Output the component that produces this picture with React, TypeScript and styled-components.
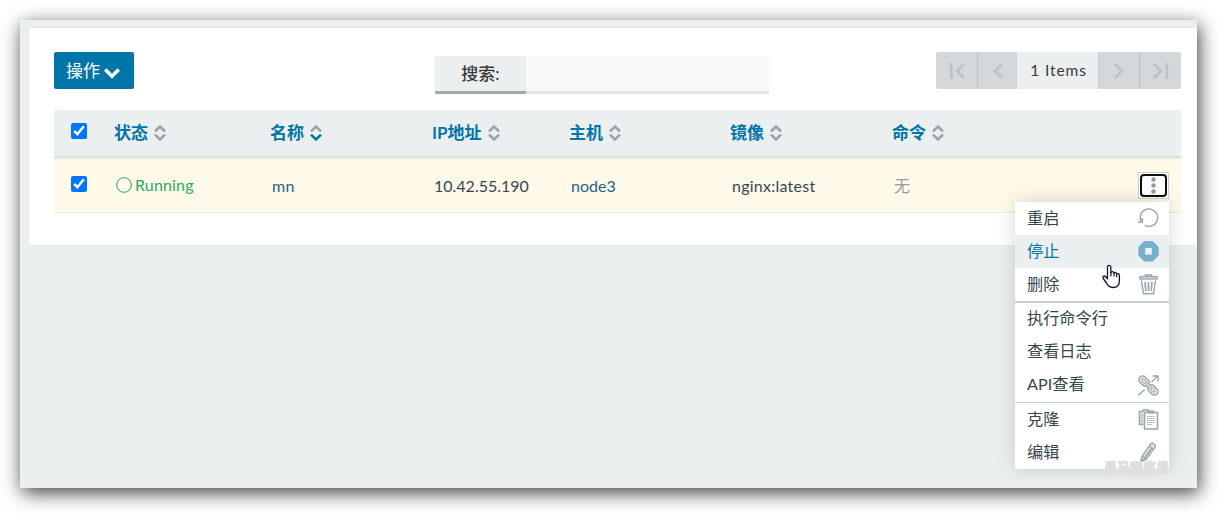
import React from 'react';
import styled, { createGlobalStyle, css } from 'styled-components';

const GlobalStyle = createGlobalStyle`
  * { box-sizing: border-box; }
  body {
    margin: 0;
    background: #fff;
    color: #36474f;
    font-family: Lato, "Noto Sans CJK SC", sans-serif;
    font-size: 16px;
    overflow: hidden;
  }
  button { font: inherit; }
`;

const Page = styled.div`
  height: 513px;
  padding: 20px 20px 25px;
`;

const Frame = styled.main`
  height: 468px;
  padding: 8px 0 0 9px;
  background: #ebeff0;
  box-shadow: 2px 5px 18px rgba(0, 0, 0, 0.75);
`;

const Panel = styled.section`
  height: 217px;
  padding: 24px 16px 0 25px;
  background: #fff;
  box-shadow: 0 0 1px rgba(0, 0, 0, 0.1);
`;

const Toolbar = styled.header`
  display: flex;
  align-items: flex-start;
  height: 58px;
`;

const ActionButton = styled.button`
  display: flex;
  align-items: center;
  gap: 4px;
  width: 80px;
  height: 37px;
  padding: 0 0 0 12px;
  border: 0;
  border-radius: 2px;
  background: #0075a8;
  color: #fff;
  font-size: 17px;
  line-height: 37px;

  svg { margin-top: 6px; }
`;

const Search = styled.label`
  display: flex;
  width: 334px;
  height: 38px;
  margin: 4px 0 0 301px;
`;

const SearchLabel = styled.span`
  width: 91px;
  border-bottom: 3px solid #a4a8aa;
  background: #ebeff0;
  color: #3a3a3a;
  font-size: 17px;
  font-weight: 500;
  line-height: 35px;
  text-align: center;
`;

const SearchInput = styled.input`
  flex: 1;
  min-width: 0;
  border: 0;
  border-bottom: 3px solid #e3e6e8;
  background: #f6f8fa;
`;

const Pager = styled.nav`
  display: flex;
  width: 245px;
  height: 37px;
  margin-left: auto;
  overflow: hidden;
  border-radius: 3px;
  background: #d4d8db;
`;

const PageButton = styled.button<{ $w: number; $line?: boolean }>`
  display: flex;
  align-items: center;
  justify-content: center;
  width: ${p => p.$w}px;
  padding: 0;
  border: 0;
  border-right: ${p => (p.$line ? '1px solid #bcc1c4' : '0')};
  background: #d4d8db;
`;

const PageCount = styled.span`
  flex: 1;
  padding-left: 2px;
  border-right: 1px solid #c8cdd0;
  background: #ebeff0;
  color: #3a3a3a;
  font-size: 15.5px;
  letter-spacing: 0.9px;
  line-height: 36px;
  text-align: center;
`;

const gridColumns = css`
  display: grid;
  grid-template-columns: 50px 156px 162px 137px 161px 162px 1fr 63px;
`;

const HeadRow = styled.div`
  ${gridColumns}
  height: 49px;
  border-bottom: 2px solid #e7e7de;
  background: #ebeff0;
  box-shadow: inset 0 -1px #d9dee0;
`;

const HeadCell = styled.div`
  display: flex;
  align-items: flex-start;
  gap: 6px;
  padding: 12px 0 0 10px;
  color: #0075a8;
  font-size: 17px;
  font-weight: 700;
  line-height: 22px;

  svg { margin-top: 3px; }
`;

const BodyRow = styled.div`
  ${gridColumns}
  height: 54px;
  border-bottom: 1px solid #e9eced;
  background: #fff9e9;
`;

const tones = { text: '#36474f', link: '#1d6289', ok: '#2aab62', muted: '#999c9c' };

const BodyCell = styled.div<{ $tone?: keyof typeof tones; $spacing?: number; $lift?: number }>`
  display: flex;
  align-items: center;
  gap: 3px;
  padding: 0 0 ${p => p.$lift ?? 0}px 12px;
  color: ${p => tones[p.$tone ?? 'text']};
  letter-spacing: ${p => p.$spacing ?? 0}px;

  svg { margin-top: 1px; }
`;

const CheckCell = styled.div<{ $top: number }>`
  padding: ${p => p.$top}px 0 0 17px;
`;

const Check = styled.input`
  display: block;
  width: 16px;
  height: 16px;
  margin: 0;
  accent-color: #0075ff;
`;

const ActionCell = styled.div`
  position: relative;
  padding: 13px 0 0 20px;
`;

const MoreButton = styled.button`
  display: flex;
  width: 31px;
  height: 27px;
  padding: 1px;
  border: 1px solid #cbd0d2;
  background: #fff;
`;

const FocusRing = styled.span`
  display: flex;
  align-items: center;
  justify-content: center;
  width: 27px;
  height: 23px;
  border: 2px solid #101010;
  border-radius: 4px;
`;

const Menu = styled.ul`
  position: absolute;
  z-index: 2;
  top: 43px;
  right: 12px;
  width: 154px;
  margin: 0;
  padding: 0;
  background: #fff;
  box-shadow: 0 0 18px rgba(0, 0, 0, 0.16);
  list-style: none;
`;

const MenuItem = styled.li<{ $active?: boolean; $raised?: boolean }>`
  display: flex;
  justify-content: space-between;
  height: 33px;
  padding: 0 10px 0 12px;
  background: ${p => (p.$active ? '#ebeff0' : '#fff')};
  color: ${p => (p.$active ? '#0075a8' : '#36474f')};
  font-size: 16.2px;
  line-height: ${p => (p.$raised ? 29 : 31)}px;

  svg { margin-top: 6px; }
`;

const Divider = styled.li<{ $h: number }>`
  height: ${p => p.$h}px;
  background: #c8cfd2;
`;

const Watermark = styled.li`
  position: absolute;
  right: 0;
  bottom: -7px;
  color: #e0dedd;
  font-size: 13px;
  font-weight: 900;
  line-height: 18px;
  white-space: nowrap;
  -webkit-text-stroke: 0.8px #e0dedd;
`;

const Cursor = styled.svg`
  position: absolute;
  top: 62px;
  left: 86px;
`;

const SortIcon = ({ desc }: { desc?: boolean }) => (
  <svg width="12" height="16" viewBox="0 0 12 16" fill="none" strokeWidth="2.5">
    <path d="M1 6.3 6 1.5 11 6.3" stroke="#9ba2a6" />
    <path d="M1 9.7 6 14.5 11 9.7" stroke={desc ? '#0075a8' : '#9ba2a6'} />
  </svg>
);

const PageIcon = ({ last, bar }: { last?: boolean; bar?: boolean }) => (
  <svg width="18" height="18" viewBox="0 0 18 18" fill="none" stroke="#bcc2c5" strokeWidth="2.7">
    <g transform={last ? 'translate(18 0) scale(-1 1)' : undefined}>
      {bar && <path d="M3.2 1v16" />}
      <path d={bar ? 'M16 2 9 9l7 7' : 'M13 2 6 9l7 7'} />
    </g>
  </svg>
);

const iconProps = { width: 21, height: 21, viewBox: '0 0 21 21', fill: 'none', stroke: '#9ba7ab' };

const RestartIcon = () => (
  <svg {...iconProps} strokeWidth="1.5">
    <path d="M3.2 13.6A8.7 8.7 0 1 1 7 17.4" />
    <path d="M.3 14h4V10" strokeWidth="1.7" />
  </svg>
);

const StopIcon = () => (
  <svg {...iconProps} stroke="none">
    <path d="M6.3 0h8.4l6 6v8.4l-6 6H6.3l-6-6V6z" fill="#75b1cd" />
    <rect x="7.2" y="7" width="6.6" height="6.6" fill="#ebf2f5" />
  </svg>
);

const TrashIcon = () => (
  <svg {...iconProps} strokeWidth="1.4">
    <path d="M7.5 2.5V1h6v1.5" />
    <rect x="2" y="2.6" width="17" height="2.4" fill="#dfe3e4" />
    <path d="M3.5 6.500 5.500 19.700h10L17.500 6.500" />
    <path d="M7 8l.8 9M10.500 8v9M14 8l-.8 9" strokeWidth="1.700" />
  </svg>
);

const LinkIcon = () => (
  <svg {...iconProps} strokeWidth="1.3">
    <g transform="rotate(45 10.5 10.5)" fill="#e4e8e9" strokeWidth="1.5">
      <rect x="-1.5" y="6.8" width="11.5" height="7.4" rx="3.7" />
      <rect x="11" y="6.8" width="11.5" height="7.4" rx="3.7" />
      <rect x="1.7" y="9.3" width="5" height="2.4" rx="1.2" fill="#fff" strokeWidth="1" />
      <rect x="14.3" y="9.3" width="5" height="2.4" rx="1.2" fill="#fff" strokeWidth="1" />
      <path d="M7 10.5h7" strokeWidth="3" />
      <path d="M7.5 10.5h6" stroke="#fff" strokeWidth="1" />
    </g>
    <path d="M.7 20.3 6.5 14.5M13.5 7 19.5 1M14.5 1h5.5v5.5" strokeWidth="1.4" />
  </svg>
);

const CloneIcon = () => (
  <svg {...iconProps}>
    <path d="M5.5 15.5h-4v-13h3l1-1.5h5l1 1.5h3" fill="#e8ebec" strokeWidth="1.6" />
    <path d="M3 6h2M3 8.5h2M3 11h2M3 13h2" />
    <rect x="6.5" y="3.5" width="13" height="16.5" fill="#fff" strokeWidth="1.6" />
    <path d="M10 4V2h6v2z" fill="#9ba7ab" />
    <path d="M9 7.5h8M9 9.5h8M9 11.5h8M9 13.5h8M9 15.5h5" strokeDasharray="1.5 .5" strokeWidth=".9" />
  </svg>
);

const PencilIcon = () => (
  <svg {...iconProps} strokeWidth="1.4">
    <path d="M3 19.8 4 14.2 12.7 2.2Q14 .5 16 2T17 5.2L8.2 17.2z" fill="#e1e5e6" />
    <path d="m11.3 4.2 4.2 3M4.5 14.5l3.6 2.5M13.5 6.5l-7 9.5" />
    <path d="M3 19.8l.5-3 2 1.5z" fill="#9ba7ab" />
  </svg>
);

const columns = ['状态', '名称', 'IP地址', '主机', '镜像', '命令'];

export default function App() {
  return (
    <Page>
      <GlobalStyle />
      <Frame>
        <Panel>
          <Toolbar>
            <ActionButton>
              操作
              <svg width="16" height="11" viewBox="0 0 16 11" fill="none" stroke="#fff" strokeWidth="3.4">
                <path d="m1.2 1.5 6.8 6.8 6.8-6.8" />
              </svg>
            </ActionButton>
            <Search>
              <SearchLabel>搜索:</SearchLabel>
              <SearchInput />
            </Search>
            <Pager>
              <PageButton $w={42} $line><PageIcon bar /></PageButton>
              <PageButton $w={39}><PageIcon /></PageButton>
              <PageCount>1 Items</PageCount>
              <PageButton $w={41} $line><PageIcon last /></PageButton>
              <PageButton $w={41}><PageIcon last bar /></PageButton>
            </Pager>
          </Toolbar>
          <HeadRow>
            <CheckCell $top={13}><Check type="checkbox" defaultChecked /></CheckCell>
            {columns.map(name => (
              <HeadCell key={name}>{name}<SortIcon desc={name === '名称'} /></HeadCell>
            ))}
          </HeadRow>
          <BodyRow>
            <CheckCell $top={17}><Check type="checkbox" defaultChecked /></CheckCell>
            <BodyCell $tone="ok" $spacing={0.15} $lift={2}>
              <svg width="16" height="16" viewBox="0 0 16 16" fill="none" stroke="#2aab62">
                <circle cx="8" cy="8" r="7.3" />
              </svg>
              Running
            </BodyCell>
            <BodyCell $tone="link" $spacing={0.3}>mn</BodyCell>
            <BodyCell>10.42.55.190</BodyCell>
            <BodyCell $tone="link">node3</BodyCell>
            <BodyCell $spacing={0.25}>nginx:latest</BodyCell>
            <BodyCell $tone="muted" $lift={1}>无</BodyCell>
            <ActionCell>
              <MoreButton>
                <FocusRing>
                  <svg width="5" height="17" viewBox="0 0 5 17" fill="#939da3">
                    <circle cx="2.5" cy="2.5" r="2.2" />
                    <circle cx="2.5" cy="8.5" r="2.2" />
                    <circle cx="2.5" cy="14.5" r="2.2" />
                  </svg>
                </FocusRing>
              </MoreButton>
              <Menu>
                <MenuItem>重启<RestartIcon /></MenuItem>
                <MenuItem $active>停止<StopIcon /></MenuItem>
                <MenuItem>删除<TrashIcon /></MenuItem>
                <Divider $h={2} />
                <MenuItem $raised>执行命令行</MenuItem>
                <MenuItem $raised>查看日志</MenuItem>
                <MenuItem $raised>API查看<LinkIcon /></MenuItem>
                <Divider $h={1} />
                <MenuItem>克隆<CloneIcon /></MenuItem>
                <MenuItem>编辑<PencilIcon /></MenuItem>
                <Watermark>黑马程序员</Watermark>
                <Cursor width="20" height="25" viewBox="0 0 20 25">
                  <path
                    d="M6.5 15V3.2Q6.5 1.3 8.2 1.3T9.9 3.2V8.5Q11.6 6.5 13 9 14.5 7.5 15.6 9.8 18.4 8.8 18.4 12v4.5Q18.4 23.5 12 23.5 7.5 23.5 5.5 19L2.3 14.5Q1.3 12.6 2.7 12.1 4.5 11.5 6.5 15Z"
                    fill="#fff"
                    stroke="#111827"
                    strokeWidth="1.3"
                    strokeLinejoin="round"
                  />
                  <path d="M9.9 8v4.5M13 9v3.5M15.7 10v3" stroke="#111827" strokeWidth="1.2" />
                </Cursor>
              </Menu>
            </ActionCell>
          </BodyRow>
        </Panel>
      </Frame>
    </Page>
  );
}
